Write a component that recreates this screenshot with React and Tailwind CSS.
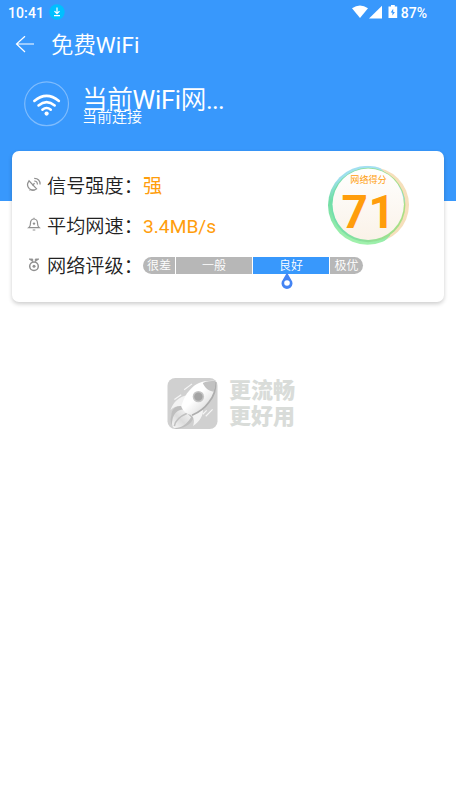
import React from 'react';

const BackIcon = () => (
  <svg className="block h-[18px] w-[20px] shrink-0" viewBox="0 0 20 18" fill="none" stroke="white" strokeWidth="1.2">
    <path d="M19 8H1.500M10 .2L1.500 8l8.500 8" />
  </svg>
);

const WifiIcon = () => (
  <svg className="block h-[46px] w-[46px] shrink-0" viewBox="0 0 46 46" fill="none">
    <circle cx="22.600" cy="22.800" r="21.900" stroke="#7fbcfd" strokeWidth="1.200" />
    <g stroke="white" strokeWidth="2.500" strokeLinecap="round">
      <path d="M10.300 20Q22.600 9.700 34.900 20" />
      <path d="M14.500 24.500Q22.600 17.700 30.700 24.500" />
      <path d="M18.400 28.700Q22.600 25.200 26.800 28.700" />
    </g>
    <circle cx="22.600" cy="32.600" r="2.100" fill="white" />
  </svg>
);

const SignalIcon = () => (
  <svg className="block h-[16px] w-[16px] shrink-0" viewBox="0 0 16 16" fill="none" stroke="#909090" strokeWidth="1.200">
    <path d="M3 3.800C.9 6.800 1.300 9.800 3.400 11.800c2.200 1.900 5 1.800 7.200.1Z" />
    <path d="M6.300 8.200l2.300-2M8.200 4c1.900 0 3.200 1.300 3.200 3.400M8.200 1.300c3.700 0 5.900 2.500 5.900 6.100" />
    <path d="M5 12.500l-1.500 1M5 12.800h4" strokeWidth=".8" />
  </svg>
);

const BellIcon = () => (
  <svg className="block h-[16px] w-[16px] shrink-0" viewBox="0 0 16 16" fill="none" stroke="#909090" strokeWidth="1.200">
    <path d="M8 .8v1.200M2.700 10.700h10.600c-1.200-1-1.700-1.900-1.700-3.800 0-3-1.200-4.900-3.600-4.900s-3.600 1.900-3.600 4.900c0 1.900-.5 2.800-1.700 3.800ZM6.700 13h2.600" />
    <circle cx="8" cy="6.600" r="1.200" fill="#909090" stroke="none" />
  </svg>
);

const MedalIcon = () => (
  <svg className="block h-[16px] w-[16px] shrink-0" viewBox="0 0 16 16" fill="none" stroke="#909090" strokeWidth="1.500">
    <circle cx="8" cy="9.300" r="4.300" />
    <circle cx="8" cy="9.300" r="1.500" fill="#909090" stroke="none" />
    <path d="M3.200 2h3.500v2.500zM12.800 2H9.300v2.500z" fill="#909090" strokeWidth=".9" />
  </svg>
);

const ScoreRing = () => (
  <svg className="block h-[82px] w-[84px]" viewBox="0 0 84 82">
    <defs>
      <linearGradient id="ring" x1="0.600" y1="0" x2="0.400" y2="1">
        <stop offset="0" stopColor="#a5e0f3" />
        <stop offset=".25" stopColor="#9ddfec" />
        <stop offset=".55" stopColor="#72dda5" />
        <stop offset="1" stopColor="#a3f2ac" />
      </linearGradient>
      <linearGradient id="inner" x1="0" y1="0" x2="1" y2="0">
        <stop offset="0" stopColor="#70dfac" />
        <stop offset="1" stopColor="#acdf83" />
      </linearGradient>
      <linearGradient id="disc" x1="0" y1="0" x2="0" y2="1">
        <stop offset="0" stopColor="#ffffff" />
        <stop offset="1" stopColor="#faf2e8" />
      </linearGradient>
    </defs>
    <circle cx="43" cy="40" r="38" fill="#f6dfbb" />
    <circle cx="39.500" cy="40.200" r="39.500" fill="url(#ring)" clipPath="path('M0 0H50L62 12V70L50 82H0Z')" />
    <circle cx="40.200" cy="40" r="37.200" fill="url(#inner)" />
    <path d="M13.500 16A37 37 0 0 1 77 39A40 40 0 0 0 13.500 16Z" fill="#93d8df" />
    <circle cx="40.200" cy="39.300" r="35.700" fill="url(#disc)" />
  </svg>
);

const RocketLogo = () => (
  <svg className="block h-[51px] w-[51px]" viewBox="0 0 51 52">
    <defs>
      <linearGradient id="body" x1="0" y1="0" x2="1" y2="1">
        <stop offset=".45" stopColor="#fff" />
        <stop offset=".75" stopColor="#e2e2e2" />
        <stop offset="1" stopColor="#b7b7b7" />
      </linearGradient>
      <linearGradient id="flame" x1="1" y1="0" x2="0" y2="1">
        <stop offset="0" stopColor="#f8f8f8" />
        <stop offset=".55" stopColor="#dcdcdc" />
        <stop offset="1" stopColor="#f8f8f8" />
      </linearGradient>
    </defs>
    <rect width="51" height="52" rx="8" fill="#d0d0d0" />
    <path d="M17 12l8-6M7 22l7-5M39 39l7-7M36 37l4-4" stroke="#f5f5f5" strokeWidth="1.200" />
    <path d="M4 38C4 32 9 27 17 28l10 10c0 6-7 13-18 14C4 50 2 44 4 38Z" fill="#bebebe" />
    <path d="M5 43c1-7 6-11 11-11l8 8c-4 7-10 11-16 11-3 0-4-4-3-8Z" fill="url(#flame)" />
    <path d="M7 49C8 43 13 39 20 36" fill="none" stroke="#c0c0c0" strokeWidth="1.600" />
    <path d="M21 17C12 19 6 24 3 33c4-4 8-5 13-4M36 31c1 7-3 13-10 18 2-5 1-9-2-11" fill="#f3f3f3" />
    <path d="M49 3C37 2 29 5 23 12c-5 5-7 11-9 17 2 5 6 8 11 9 7-3 12-6 17-13 6-8 7-14 7-22Z" fill="url(#body)" />
    <path d="M49 4c0 8-1 14-7 21-5 7-10 10-17 13" fill="none" stroke="#adadad" strokeWidth="1.800" />
    <path d="M49 3C44 3 40 3 36 5c2 5 6 8 11 9 1-3 2-7 2-11Z" fill="#c2c2c2" />
    <circle cx="31.500" cy="19" r="5.800" fill="#c4c4c4" />
    <circle cx="31.500" cy="19" r="4.300" fill="#a4a4a4" />
  </svg>
);

const rows = [
  { icon: <SignalIcon />, label: '信号强度：', value: '强' },
  { icon: <BellIcon />, label: '平均网速：', value: '3.4MB/s' },
  { icon: <MedalIcon />, label: '网络评级：' },
];

const levels = [
  { name: '很差', style: 'w-[32px] rounded-l-full bg-[#b7b7b7]' },
  { name: '一般', style: 'w-[76px] bg-[#b7b7b7]' },
  { name: '良好', style: 'w-[76px] bg-[#3898fc]', active: true },
  { name: '极优', style: 'w-[33px] rounded-r-full bg-[#b7b7b7]' },
];

const StatusBar = () => (
  <div className="flex h-[26px] items-center pl-[8px] pr-[29px] text-[14px] font-medium leading-none">
    <span className="tracking-[0.1px]">10:41</span>
    <svg className="-mt-[2px] ml-[5px] h-[16px] w-[16px]" viewBox="0 0 16 16" fill="none">
      <circle cx="8" cy="8" r="7.700" fill="#00bfff" />
      <path d="M8 3.500v6M5.500 7.200L8 9.700l2.500-2.500M5 11.700h6" stroke="white" strokeWidth="1.200" />
    </svg>
    <svg className="-mt-[2px] ml-auto h-[14px] w-[47px]" viewBox="0 0 47 14" fill="white">
      <path d="M0 3.300Q8-2.300 16 3.300L8 13z" />
      <path d="M17 13.500L30 .8V13.500z" />
      <path d="M36.500 1.500H39V0h3.800v1.500h2.400V13h-8.700z" />
      <path d="M41.200 3.700L38.700 7.500h1.700v3L42.900 7h-1.700z" fill="#3898fc" />
    </svg>
    <span className="ml-[2px]">87%</span>
  </div>
);

const App = () => {
  return (
    <div className="h-[811px] w-[456px] overflow-hidden bg-white font-['Roboto','Noto_Sans_CJK_SC',sans-serif]">
      <header className="h-[201px] bg-[#3898fc] text-white">
        <StatusBar />
        <div className="flex h-[37px] items-center pl-[15px]">
          <BackIcon />
          <h1 className="ml-[16px] text-[22.400px] font-[350] leading-[36px]">免费<span className="font-normal tracking-[0.2px]">WiFi</span></h1>
        </div>
        <div className="flex pl-[24px] pt-[18px]">
          <WifiIcon />
          <div className="ml-[12px]">
            <div className="pt-px text-[25.600px] font-[350] leading-[36px] tracking-[-0.3px]">
              当前<span className="font-normal">WiFi</span>网<span className="font-normal tracking-[-0.7px]">...</span>
            </div>
            <div className="-mt-[10px] text-[15px] font-[350] leading-[18px]">当前连接</div>
          </div>
        </div>
      </header>

      <main>
        <section className="mx-[12px] -mt-[50px] flex h-[151px] rounded-[7px] bg-white pl-[14px] pt-[14px] shadow-[0_2px_4px_rgba(0,0,0,0.2)]">
          <div className="w-[302px]">
            {rows.map((row) => (
              <div key={row.label} className="flex h-[40px] items-center text-[19.200px]">
                {row.icon}
                <span className="ml-[5px] w-[96px] shrink-0 whitespace-nowrap pt-[4px] font-[350] text-[#222]">{row.label}</span>
                {row.value ? (
                  <span className="pt-[4px] font-normal text-[#ff9d0c]">{row.value}</span>
                ) : (
                  <div className="flex gap-px text-[12px] font-[350] leading-[18px] text-white">
                    {levels.map((level) => (
                      <div key={level.name} className={`relative h-[17px] text-center ${level.style}`}>
                        {level.name}
                        {level.active && (
                          <svg className="absolute left-[27.500px] top-[15.500px] h-[17px] w-[12px]" viewBox="0 0 12 17">
                            <path d="M6 .5L10.300 8A5.500 5.500 0 1 1 1.700 8Z" fill="#4484f3" />
                            <circle cx="6" cy="11" r="2.800" fill="white" />
                          </svg>
                        )}
                      </div>
                    ))}
                  </div>
                )}
              </div>
            ))}
          </div>
          <div className="relative h-[82px] w-[84px] text-[#ff9d0c]">
            <ScoreRing />
            <div className="absolute left-0 top-[9px] w-[81px] text-center text-[9.100px] leading-[13px]">网络得分</div>
            <div className="absolute left-0 top-[22px] w-[81px] text-center text-[46px] font-bold leading-[50px] tracking-[0.5px]">71</div>
          </div>
        </section>

        <div className="mt-[75px] flex items-center pl-[167px]">
          <RocketLogo />
          <div className="ml-[11px] whitespace-nowrap pt-px text-[22px] font-black leading-[26px] text-[#d9dcd9]">
            <div>更流畅</div>
            <div>更好用</div>
          </div>
        </div>
      </main>
    </div>
  );
};

export default App;
